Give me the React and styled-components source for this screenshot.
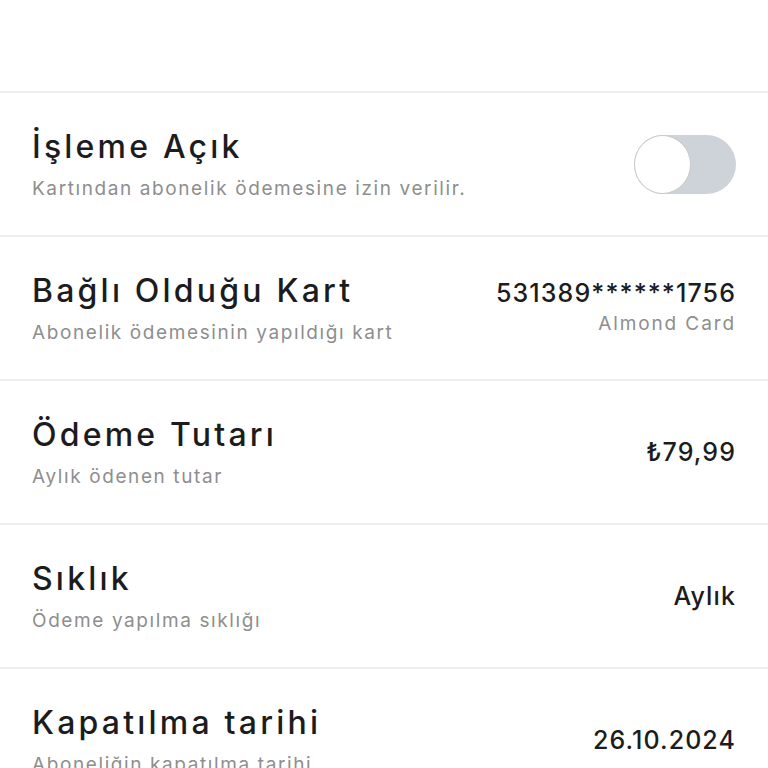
import styled, { createGlobalStyle } from "styled-components";

const GlobalStyle = createGlobalStyle`
  body {
    margin: 0;
    background: #ffffff;
    font-family: Inter, "Noto Sans", sans-serif;
  }
`;

const Page = styled.div`
  width: 768px;
  padding-top: 91px;
`;

const Row = styled.div`
  display: flex;
  justify-content: space-between;
  align-items: center;
  height: 142px;
  padding: 0 32px;
  border-top: 2px solid #ededed;
`;

const Info = styled.div`
  display: flex;
  flex-direction: column;
  margin-top: 1px;
`;

const Title = styled.div`
  font-size: 32px;
  line-height: 40px;
  font-weight: 500;
  letter-spacing: 3.2px;
  color: #1c1c1e;
`;

const Subtitle = styled.div`
  margin-top: 9px;
  font-size: 19px;
  line-height: 26px;
  letter-spacing: 1.6px;
  color: #8e8e8e;
`;

const Value = styled.div`
  display: flex;
  flex-direction: column;
  align-items: flex-end;
`;

const ValueMain = styled.div`
  font-size: 25px;
  line-height: 30px;
  font-weight: 500;
  letter-spacing: 1.1px;
  color: #1c1c1e;
`;

const ValueSub = styled.div`
  margin-top: 2px;
  font-size: 19px;
  line-height: 28px;
  letter-spacing: 1.9px;
  color: #8e8e8e;
`;

const Toggle = styled.div`
  width: 102px;
  height: 59px;
  border-radius: 30px;
  background: #cdd3d9;
  display: flex;
  align-items: center;
`;

const Knob = styled.div`
  width: 55px;
  height: 57px;
  border-radius: 50%;
  background: #ffffff;
  border: 1px solid #c9c9c9;
`;

const rows = [
  { title: "Bağlı Olduğu Kart", sub: "Abonelik ödemesinin yapıldığı kart", value: "531389******1756", valueSub: "Almond Card" },
  { title: "Ödeme Tutarı", sub: "Aylık ödenen tutar", value: "₺79,99" },
  { title: "Sıklık", sub: "Ödeme yapılma sıklığı", value: "Aylık" },
  { title: "Kapatılma tarihi", sub: "Aboneliğin kapatılma tarihi", value: "26.10.2024" },
];

export default function App() {
  return (
    <Page>
      <GlobalStyle />
      <Row>
        <Info>
          <Title>İşleme Açık</Title>
          <Subtitle>Kartından abonelik ödemesine izin verilir.</Subtitle>
        </Info>
        <Toggle>
          <Knob />
        </Toggle>
      </Row>
      {rows.map((r) => (
        <Row key={r.title}>
          <Info>
            <Title>{r.title}</Title>
            <Subtitle>{r.sub}</Subtitle>
          </Info>
          <Value>
            <ValueMain>{r.value}</ValueMain>
            {r.valueSub && <ValueSub>{r.valueSub}</ValueSub>}
          </Value>
        </Row>
      ))}
    </Page>
  );
}
